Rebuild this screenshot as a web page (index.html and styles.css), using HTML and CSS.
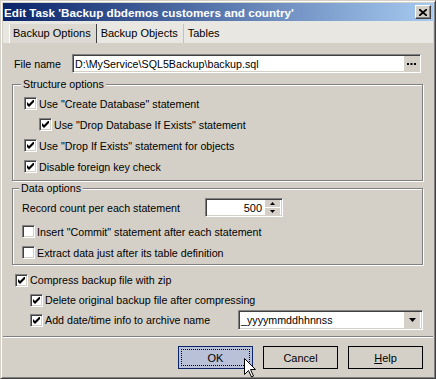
FILE: index.html
```html
<!DOCTYPE html>
<html lang="en">
<head>
    <meta charset="utf-8">
    <title>Edit Task</title>
    <link rel="stylesheet" href="styles.css">
</head>
<body>
    <div class="window">
        <div class="titlebar">
            <span class="title">Edit Task 'Backup dbdemos customers and country'</span>
            <span class="close">
                <svg width="8" height="7" viewBox="0 0 8 7"><path d="M0 0 L8 7 M8 0 L0 7" stroke="#000" stroke-width="1.7"/></svg>
            </span>
        </div>

        <div class="tabs">
            <span class="tab active">Backup Options</span>
            <span class="tab">Backup Objects</span>
            <span class="tab last">Tables</span>
        </div>

        <div class="page">
            <div class="file-row">
                <label class="file-label">File name</label>
                <div class="edit file-edit">
                    <span class="edit-text">D:\MyService\SQL5Backup\backup.sql</span>
                    <span class="ellipsis">
                        <svg width="9" height="2" viewBox="0 0 9 2"><rect x="0" y="0" width="2" height="2"/><rect x="3.5" y="0" width="2" height="2"/><rect x="7" y="0" width="2" height="2"/></svg>
                    </span>
                </div>
            </div>

            <div class="group structure">
                <span class="caption">Structure options</span>
                <div class="check"><span class="cb"><svg width="7" height="7" viewBox="0 0 7 7"><path d="M0 2 L2 4 L7 -1 L7 2 L2 7 L0 5 Z"/></svg></span>Use "Create Database" statement</div>
                <div class="check indent"><span class="cb"><svg width="7" height="7" viewBox="0 0 7 7"><path d="M0 2 L2 4 L7 -1 L7 2 L2 7 L0 5 Z"/></svg></span>Use "Drop Database If Exists" statement</div>
                <div class="check"><span class="cb"><svg width="7" height="7" viewBox="0 0 7 7"><path d="M0 2 L2 4 L7 -1 L7 2 L2 7 L0 5 Z"/></svg></span>Use "Drop If Exists" statement for objects</div>
                <div class="check"><span class="cb"><svg width="7" height="7" viewBox="0 0 7 7"><path d="M0 2 L2 4 L7 -1 L7 2 L2 7 L0 5 Z"/></svg></span>Disable foreign key check</div>
            </div>

            <div class="group data">
                <span class="caption">Data options</span>
                <div class="record-row">
                    <span class="record-label">Record count per each statement</span>
                    <div class="edit spin">
                        <span class="spin-text">500</span>
                        <span class="spin-buttons">
                            <span class="spin-btn"><svg width="5" height="3" viewBox="0 0 5 3"><path d="M2.5 0 L5 3 L0 3 Z"/></svg></span>
                            <span class="spin-btn"><svg width="5" height="3" viewBox="0 0 5 3"><path d="M0 0 L5 0 L2.5 3 Z"/></svg></span>
                        </span>
                    </div>
                </div>
                <div class="check first"><span class="cb"></span>Insert "Commit" statement after each statement</div>
                <div class="check"><span class="cb"></span>Extract data just after its table definition</div>
            </div>

            <div class="opt-row compress"><span class="cb"><svg width="7" height="7" viewBox="0 0 7 7"><path d="M0 2 L2 4 L7 -1 L7 2 L2 7 L0 5 Z"/></svg></span>Compress backup file with zip</div>
            <div class="opt-row sub"><span class="cb"><svg width="7" height="7" viewBox="0 0 7 7"><path d="M0 2 L2 4 L7 -1 L7 2 L2 7 L0 5 Z"/></svg></span>Delete original backup file after compressing</div>
            <div class="opt-row sub">
                <span class="cb"><svg width="7" height="7" viewBox="0 0 7 7"><path d="M0 2 L2 4 L7 -1 L7 2 L2 7 L0 5 Z"/></svg></span>Add date/time info to archive name
                <div class="edit combo">
                    <span class="combo-text">_yyyymmddhhnnss</span>
                    <span class="drop-btn"><svg width="7" height="4" viewBox="0 0 7 4"><path d="M0 0 L7 0 L3.5 4 Z"/></svg></span>
                </div>
            </div>

            <div class="sep"></div>

            <div class="buttons">
                <span class="btn default"><span class="focus">OK</span></span>
                <span class="btn">Cancel</span>
                <span class="btn"><span><u>H</u>elp</span></span>
            </div>
        </div>

        <svg class="cursor" width="12" height="20" viewBox="0 0 12 20">
            <path d="M0.5 0.5 L0.5 16.5 L4.5 12.5 L7.5 19 L9.5 18 L6.5 11.5 L11.5 11.5 Z" fill="#fff" stroke="#000" stroke-width="1"/>
        </svg>
    </div>
</body>
</html>
```

FILE: styles.css
```css
body {
    margin: 0;
    font-family: "Liberation Sans", Arial, sans-serif;
    font-size: 10.7px;
    color: #000;
}
.window {
    position: relative;
    width: 436px;
    height: 379px;
    box-sizing: border-box;
    background: #d4d0c8;
    border: 1px solid;
    border-color: #d4d0c8 #404040 #404040 #d4d0c8;
    box-shadow: inset 1px 1px #fff, inset -1px -1px #808080;
    padding: 2px;
    display: flex;
    flex-direction: column;
}
.titlebar {
    height: 18px;
    flex: none;
    display: flex;
    align-items: center;
    padding-left: 1px;
    background: linear-gradient(to right, #0a246a, #a6caf0);
}
.title {
    flex: 1;
    color: #fff;
    font-weight: bold;
    font-size: 11.7px;
}
.close {
    width: 16px;
    height: 14px;
    margin-right: 2px;
    box-sizing: border-box;
    background: #d4d0c8;
    border: 1px solid;
    border-color: #fff #404040 #404040 #fff;
    box-shadow: inset -1px -1px #808080;
    display: flex;
    align-items: center;
    justify-content: center;
}
.tabs {
    height: 22px;
    flex: none;
    display: flex;
    align-items: flex-end;
    padding-left: 6px;
    background: #e9e7e1;
    font-size: 11px;
}
.tab {
    height: 19px;
    line-height: 18px;
    padding: 0 5px 0 4px;
    border-right: 1px solid #c4c1b9;
}
.tab.active {
    background: #dcd9d2;
    border-left: 1px solid #fff;
    border-right-color: #404040;
    padding-left: 3px;
}
.tab.last {
    border-right: none;
}
.page {
    flex: 1;
    padding: 11px 10px 0 9px;
    display: flex;
    flex-direction: column;
}
.file-row {
    display: flex;
    align-items: center;
    height: 19px;
}
.file-label {
    width: 60px;
    padding-left: 2px;
    box-sizing: border-box;
}
.edit {
    box-sizing: border-box;
    height: 19px;
    background: #fff;
    border: 1px solid;
    border-color: #808080 #fff #fff #808080;
    box-shadow: inset 1px 1px #404040, inset -1px -1px #d4d0c8;
    display: flex;
    align-items: center;
}
.file-edit {
    width: 349px;
    padding: 0 1px 0 2px;
}
.ellipsis {
    margin-left: auto;
    width: 15px;
    height: 15px;
    background: #d4d0c8;
    display: flex;
    align-items: center;
    justify-content: center;
}
.group {
    margin-top: 11px;
    border: 1px solid #808080;
    box-shadow: inset 1px 1px #fff, 1px 1px #fff;
    display: flex;
    flex-direction: column;
    padding: 0 0 3px 11px;
}
.group.data {
    margin-top: 7px;
    padding: 0 0 1px 9px;
}
.caption {
    align-self: flex-start;
    margin: -7px 0 2px -3px;
    padding: 0 2px;
    line-height: 13px;
    background: #d4d0c8;
}
.check, .opt-row {
    display: flex;
    align-items: center;
    height: 21px;
}
.check.indent {
    margin-left: 15px;
}
.check.first {
    margin-top: 4px;
}
.cb {
    width: 13px;
    height: 13px;
    flex: none;
    box-sizing: border-box;
    margin-right: 2px;
    background: #fff;
    border: 1px solid;
    border-color: #808080 #fff #fff #808080;
    box-shadow: inset 1px 1px #404040, inset -1px -1px #d4d0c8;
    display: flex;
    align-items: center;
    justify-content: center;
}
.record-row {
    display: flex;
    align-items: center;
    height: 19px;
    margin-top: 1px;
}
.record-label {
    width: 183px;
}
.spin {
    width: 78px;
    padding-right: 2px;
}
.spin-text {
    flex: 1;
    text-align: right;
    padding-right: 3px;
    font-size: 11px;
}
.spin-buttons {
    width: 15px;
    display: flex;
    flex-direction: column;
    gap: 1px;
}
.spin-btn {
    height: 7px;
    background: #d4d0c8;
    display: flex;
    align-items: center;
    justify-content: center;
}
.opt-row {
    height: 20px;
}
.opt-row.compress {
    margin-top: 5px;
    padding-left: 3px;
}
.opt-row.sub {
    padding-left: 18px;
}
.combo {
    margin-left: auto;
    width: 185px;
    height: 20px;
    padding: 0 2px 0 2px;
}
.combo-text {
    flex: 1;
}
.drop-btn {
    width: 16px;
    height: 16px;
    background: #d4d0c8;
    display: flex;
    align-items: center;
    justify-content: center;
}
.sep {
    margin: 6px -10px 0 -9px;
    border-top: 1px solid #808080;
    border-bottom: 1px solid #fff;
}
.buttons {
    display: flex;
    justify-content: flex-end;
    gap: 10px;
    margin-top: 8px;
    font-size: 11px;
}
.btn {
    width: 75px;
    height: 23px;
    box-sizing: border-box;
    border: 1px solid #000;
    background: #d4d0c8;
    display: flex;
    align-items: center;
    justify-content: center;
}
.btn.default {
    background: #b9c1d8;
    border-color: #0a246a;
    padding: 2px;
    align-items: stretch;
}
.focus {
    flex: 1;
    border: 1px dotted #000;
    display: flex;
    align-items: center;
    justify-content: center;
}
.cursor {
    position: absolute;
    left: 243px;
    top: 357px;
}
```
